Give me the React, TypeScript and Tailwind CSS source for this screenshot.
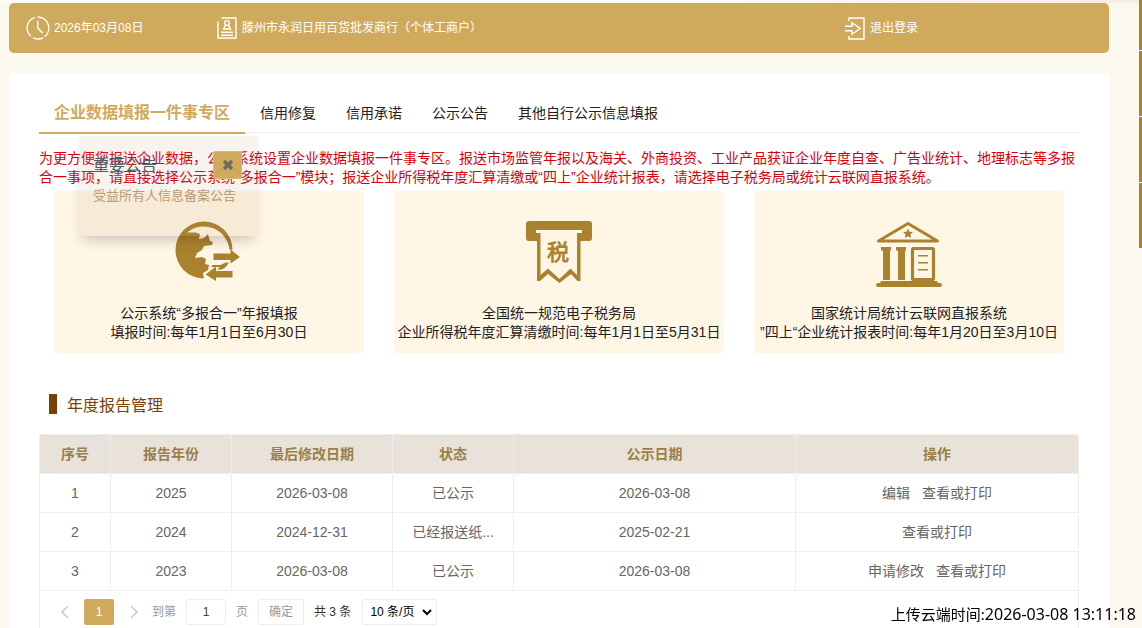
import React from "react";

const tabs = ["信用修复", "信用承诺", "公示公告", "其他自行公示信息填报"];

const ClockIcon: React.FC = () => (
  <svg width="24" height="24" viewBox="0 0 24 24" fill="none" stroke="white" strokeWidth="1.4">
    <path d="M9 1.4A11 11 0 0 0 5 20.3M7 21.5a11 11 0 0 0 10 .3M18.6 20.6A11 11 0 0 0 11.5 1" />
    <path d="M11.7 4.5V12l5 5" />
  </svg>
);

const CompanyIcon: React.FC = () => (
  <svg width="20" height="22" viewBox="0 0 20 22" fill="none" stroke="white" strokeWidth="1.4">
    <path d="M4.5 1H19v20H1V4.5" />
    <circle cx="10" cy="6" r="2.4" />
    <path d="M8.6 8.2 6.5 12h7l-2.1-3.8M4 15.2h12M4 18.2h12" />
  </svg>
);

const LogoutIcon: React.FC = () => (
  <svg width="20" height="23" viewBox="0 0 20 23" fill="none" stroke="white" strokeWidth="1.4">
    <path d="M4 4V1h15v21H4v-3" />
    <path d="M0 9.2h7V5.8l8.2 5.7L7 17.2v-3.4H0" />
  </svg>
);

const GlobeIcon: React.FC = () => (
  <svg width="68" height="68" viewBox="0 2 68 68" fill="#aa822d">
    <path d="M29 59.5A28.5 28.5 0 1 1 57.5 31L54.5 30.5A26 26 0 0 0 12 13.500L21 13.500 25 15 24 20 29 19 33 15 35 22 38 23 37 26 29 27 27 31 22 34 20 39 27 38 31 40 30 45 34 46 33 51 28 54Z" />
    <path d="M38.500 34.500h17V30.500l9.500 7.500-9.500 6.500v-3.500h-17z" />
    <path d="M57.500 52v6.500H41v3.500l-10.500-6.500L41 47.500V52z" />
    <path d="M54 43.500C52 47 50 49 47 50.500H42l3-2.500h-9l1.500-2h8l5-2.500z" />
  </svg>
);

const TaxIcon: React.FC = () => (
  <svg width="68" height="64" viewBox="0 0 68 64">
    <path d="M4 0h60a3 3 0 0 1 3 3v14a3 3 0 0 1-3 3h-8.500V60h-3L46 53 34.500 62 23 53 15 60H12V20H4a3 3 0 0 1-3-3V3a3 3 0 0 1 3-3Z" fill="#aa822d" />
    <path d="M11 9h46v3h-5V54L45.500 47.500 34.500 58 23 47.500 15.500 54V12H11Z" fill="#fff6e6" />
    <text
      x="33"
      y="39"
      textAnchor="middle"
      fontSize="22"
      fill="#aa822d"
      stroke="#aa822d"
      strokeWidth="0.8"
      fontFamily="Noto Sans CJK SC"
    >
      税
    </text>
  </svg>
);

const BankIcon: React.FC = () => (
  <svg width="66" height="66" viewBox="0 0 66 66" fill="#aa822d">
    <path d="M2.500 20 32 2.500l29.500 17.500z" fill="none" stroke="#aa822d" strokeWidth="3" strokeLinejoin="round" />
    <path d="m32 7.500 1.500 3.200 3.500.4-2.600 2.400.8 3.500-3.200-1.800-3.200 1.800.8-3.500-2.600-2.400 3.500-.4z" />
    <path d="M5 26h10v3l-1 1v29H7V30l-2-1zM20 26h10v3l-1 1v29h-7V30l-2-1z" />
    <rect x="36.500" y="27.500" width="21" height="31" rx="1" fill="none" stroke="#aa822d" strokeWidth="3.200" />
    <path d="M42 34h10v1.600H42zM42 41h10v1.600H42zM42 48h10v1.600H42z" />
    <path d="M5 60h56l1 2h2a1.500 1.500 0 0 1 0 4H2a1.500 1.500 0 0 1 0-4h2z" />
  </svg>
);

const services = [
  {
    icon: <GlobeIcon />,
    title: "公示系统“多报合一”年报填报",
    time: "填报时间:每年1月1日至6月30日",
  },
  {
    icon: <TaxIcon />,
    title: "全国统一规范电子税务局",
    time: "企业所得税年度汇算清缴时间:每年1月1日至5月31日",
  },
  {
    icon: <BankIcon />,
    title: "国家统计局统计云联网直报系统",
    time: "”四上“企业统计报表时间:每年1月20日至3月10日",
  },
];

const columns = [
  { label: "序号", width: "w-[71px]" },
  { label: "报告年份", width: "w-[121px]" },
  { label: "最后修改日期", width: "w-[161px]" },
  { label: "状态", width: "w-[121px]" },
  { label: "公示日期", width: "w-[282px]" },
  { label: "操作", width: "" },
];

const reports = [
  { year: "2025", modified: "2026-03-08", status: "已公示", published: "2026-03-08", actions: ["编辑", "查看或打印"] },
  { year: "2024", modified: "2024-12-31", status: "已经报送纸...", published: "2025-02-21", actions: ["查看或打印"] },
  { year: "2023", modified: "2026-03-08", status: "已公示", published: "2026-03-08", actions: ["申请修改", "查看或打印"] },
];

const Notice: React.FC = () => (
  <aside className="absolute left-[79px] top-[136px] h-[100px] w-[179px] rounded bg-[#af875f]/10 px-[14px] pt-[15px] shadow-[0_8px_12px_-4px_rgba(0,0,0,0.2)]">
    <div className="flex h-[30px] justify-between">
      <h2 className="text-base leading-[30px] text-[#525c66]">重要公告</h2>
      <button
        type="button"
        aria-label="关闭"
        className="mr-[2px] flex h-7 w-[29px] items-center justify-center rounded-xs border border-[#dcb871] bg-[#d0aa5c]"
      >
        <svg width="10" height="10" viewBox="0 0 10 10" stroke="#6b6b66" strokeWidth="3.4">
          <path d="M1 1l8 8M9 1L1 9" />
        </svg>
      </button>
    </div>
    <a href="#" className="mt-[5px] block whitespace-nowrap text-[13px] leading-5 text-[#b99c74]">
      受益所有人信息备案公告
    </a>
  </aside>
);

const Pagination: React.FC = () => (
  <div className="flex grow items-start border-x border-[#eee] pt-2 pl-[15px] text-xs leading-[26px] text-[#999]">
    <button type="button" aria-label="上一页" className="flex h-[26px] w-[29px] items-center pl-[6px]">
      <svg width="8" height="14" viewBox="0 0 8 14" fill="none" stroke="#ccc" strokeWidth="1.6">
        <path d="M7 1 1 7l6 6" />
      </svg>
    </button>
    <button type="button" className="h-[26px] w-[30px] rounded-xs bg-[#d0aa5c] text-white">
      1
    </button>
    <button type="button" aria-label="下一页" className="flex h-[26px] w-[38px] items-center pl-4">
      <svg width="8" height="14" viewBox="0 0 8 14" fill="none" stroke="#ccc" strokeWidth="1.6">
        <path d="m1 1 6 6-6 6" />
      </svg>
    </button>
    <label className="flex">
      到第
      <input
        type="text"
        defaultValue="1"
        className="mx-[10px] h-[26px] w-10 rounded-xs border border-[#eee] bg-white text-center text-[#444]"
      />
      页
    </label>
    <button type="button" className="ml-[10px] h-[26px] w-[46px] rounded-xs border border-[#eee] bg-white leading-6">
      确定
    </button>
    <span className="ml-[10px] text-[#333]">共 3 条</span>
    <div className="relative ml-[11px]">
      <select
        aria-label="每页条数"
        className="block h-[26px] w-[75px] appearance-none rounded-xs border border-[#eee] bg-white pl-[7px] leading-6 text-black"
      >
        <option>10 条/页</option>
        <option>20 条/页</option>
        <option>50 条/页</option>
      </select>
      <svg
        className="pointer-events-none absolute right-[5px] top-[10px]"
        width="10"
        height="7"
        viewBox="0 0 10 7"
        fill="none"
        stroke="black"
        strokeWidth="2"
      >
        <path d="m1 1 4 4 4-4" />
      </svg>
    </div>
  </div>
);

const App: React.FC = () => {
  return (
    <div className="relative flex min-h-screen flex-col overflow-hidden bg-[#fbf8ef] font-['Liberation_Sans','Noto_Sans_CJK_SC',sans-serif] text-sm">
      {/* Bottom edge of the banner */}
      <div className="h-[3px] shrink-0 bg-linear-to-r from-[#fefdf9] from-55% to-[#f7ede2]" />

      {/* User bar */}
      <header className="mr-[33px] ml-[9px] flex h-[50px] shrink-0 items-center rounded-[5px] bg-[#d0aa5c] pl-[17px] text-xs text-white">
        <div className="flex w-[191px] items-center gap-1">
          <ClockIcon />
          <span>2026年03月08日</span>
        </div>
        <div className="flex grow items-center gap-[5px]">
          <CompanyIcon />
          <span>滕州市永润日用百货批发商行（个体工商户）</span>
        </div>
        <a href="#" className="mr-[191px] flex items-center gap-[5px]">
          <LogoutIcon />
          退出登录
        </a>
      </header>

      <main className="mt-5 mr-8 ml-[9px] flex grow flex-col bg-white pt-5 pr-[31px] pl-[30px]">
        {/* Tabs */}
        <nav className="flex h-10 items-stretch border-b border-[#eee] leading-10 text-[#222]">
          <a href="#" className="h-[41px] border-b-2 border-[#d0aa5c] px-[15px] text-base leading-[39px] font-bold text-[#d0aa5c]">
            企业数据填报一件事专区
          </a>
          {tabs.map((tab) => (
            <a key={tab} href="#" className="px-[15px]">
              {tab}
            </a>
          ))}
        </nav>

        <p className="mt-4 leading-[19px] text-[#d9000b]">
          为更方便您报送企业数据，公示系统设置企业数据填报一件事专区。报送市场监管年报以及海关、外商投资、工业产品获证企业年度自查、广告业统计、地理标志等多报合一事项，请直接选择公示系统“多报合一”模块；报送企业所得税年度汇算清缴或“四上”企业统计报表，请选择电子税务局或统计云联网直报系统。
        </p>

        {/* Service cards */}
        <section className="mt-1 grid grid-cols-[31fr_33fr_31fr] gap-[30px] px-[15px]">
          {services.map((item) => (
            <a
              key={item.title}
              href="#"
              className="flex h-[162px] flex-col items-center bg-[#fff6e6] pt-[30px] leading-[19px] whitespace-nowrap text-[#222]"
            >
              <div className="h-[83px]">{item.icon}</div>
              <span>{item.title}</span>
              <span>{item.time}</span>
            </a>
          ))}
        </section>

        {/* Annual reports */}
        <h1 className="mt-[41px] ml-[10px] flex h-5 gap-[10px] text-base text-[#7a4100]">
          <span className="h-5 w-2 bg-[#7a4100]" />
          年度报告管理
        </h1>

        <table className="mt-5 w-full table-fixed border-collapse text-center text-[#666]">
          <thead>
            <tr className="h-[39px] bg-[#e9e2db] text-[#9b7f48]">
              {columns.map((col) => (
                <th key={col.label} className={`border border-[#eee] ${col.width}`}>
                  {col.label}
                </th>
              ))}
            </tr>
          </thead>
          <tbody>
            {reports.map((row, index) => (
              <tr key={row.year} className="h-[39px]">
                <td className="border border-[#eee]">{index + 1}</td>
                <td className="border border-[#eee]">{row.year}</td>
                <td className="border border-[#eee]">{row.modified}</td>
                <td className="border border-[#eee] whitespace-nowrap">{row.status}</td>
                <td className="border border-[#eee]">{row.published}</td>
                <td className="border border-[#eee]">
                  <div className="flex justify-center gap-3">
                    {row.actions.map((action) => (
                      <a key={action} href="#">
                        {action}
                      </a>
                    ))}
                  </div>
                </td>
              </tr>
            ))}
          </tbody>
        </table>
        <Pagination />
      </main>

      <Notice />

      {/* Side toolbar, tucked behind the right edge */}
      <div className="absolute top-0 right-0 flex w-[3px] flex-col gap-px bg-white">
        <div className="h-[50px] bg-[#a98231]" />
        <div className="h-[65px] bg-[#a98231]" />
        <div className="h-[65px] bg-[#a98231]" />
        <div className="h-[65px] bg-[#a98231]" />
      </div>

      <div className="fixed right-[6px] bottom-1 font-['Noto_Sans','Noto_Sans_CJK_SC',sans-serif] text-[15px] leading-5 text-black">
        上传云端时间:<time className="text-base leading-5">2026-03-08 13:11:18</time>
      </div>
    </div>
  );
};

export default App;
